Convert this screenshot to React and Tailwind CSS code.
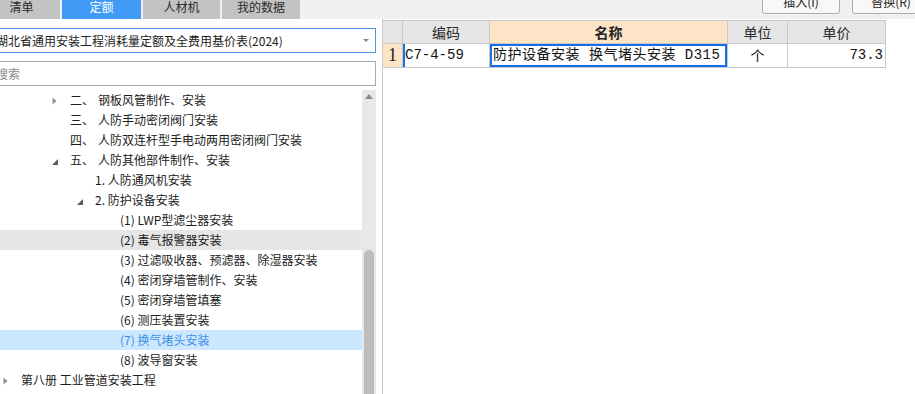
import React from 'react';

const tabs = [
    { name: '清单', w: 'w-[77px]', active: false },
    { name: '定额', w: 'w-[79px]', active: true },
    { name: '人材机', w: 'w-[77px]', active: false },
    { name: '我的数据', w: 'w-[78px]', active: false },
];

const rows = [
    { pl: 'pl-[69px]', arrow: 'closed', num: '二、', text: '钢板风管制作、安装' },
    { pl: 'pl-[69px]', num: '三、', text: '人防手动密闭阀门安装' },
    { pl: 'pl-[69px]', num: '四、', text: '人防双连杆型手电动两用密闭阀门安装' },
    { pl: 'pl-[69px]', arrow: 'open', num: '五、', text: '人防其他部件制作、安装' },
    { pl: 'pl-[94px]', text: '1. 人防通风机安装' },
    { pl: 'pl-[94px]', arrow: 'open', text: '2. 防护设备安装' },
    { pl: 'pl-[119px]', text: '(1) LWP型滤尘器安装' },
    { pl: 'pl-[119px]', text: '(2) 毒气报警器安装', hover: true },
    { pl: 'pl-[119px]', text: '(3) 过滤吸收器、预滤器、除湿器安装' },
    { pl: 'pl-[119px]', text: '(4) 密闭穿墙管制作、安装' },
    { pl: 'pl-[119px]', text: '(5) 密闭穿墙管填塞' },
    { pl: 'pl-[119px]', text: '(6) 测压装置安装' },
    { pl: 'pl-[119px]', text: '(7) 换气堵头安装', selected: true },
    { pl: 'pl-[119px]', text: '(8) 波导窗安装' },
    { pl: 'pl-[20px]', arrow: 'closed', text: '第八册 工业管道安装工程' },
];

function Arrow({ type }) {
    if (type === 'closed') {
        return (
            <svg width="5" height="8" viewBox="0 0 5 8" className="mt-[1px]">
                <path d="M0.5 0.5 L4.5 4 L0.5 7.5 Z" fill="#8f8f8f" />
            </svg>
        );
    }
    if (type === 'open') {
        return (
            <svg width="6" height="6" viewBox="0 0 6 6" className="mt-[3px]">
                <path d="M6 0 L6 6 L0 6 Z" fill="#5a5a5a" />
            </svg>
        );
    }
    return null;
}

export default function App() {
    return (
        <div className="w-[915px] h-[394px] overflow-hidden bg-white flex flex-col text-[#1c1c1c] font-['Noto_Sans_CJK_SC',sans-serif]">
            {/* top bar */}
            <div className="h-[19px] shrink-0 bg-[#f0f0f0] flex items-start">
                <div className="flex gap-[2px] -ml-[17px]">
                    {tabs.map((t) => (
                        <div
                            key={t.name}
                            className={`${t.w} h-[19px] text-center text-[12px] leading-[13px] ${t.active ? 'bg-[#3f9bf5] text-white' : 'bg-[#c3c3c3] text-[#2a2a2a]'}`}
                        >
                            {t.name}
                        </div>
                    ))}
                </div>
                <div className="ml-auto flex gap-[12px] -mr-[15px]">
                    <div className="w-[78px] h-[24px] -mt-[10px] border border-[#acacac] rounded-[3px] bg-[#f8f8f8] text-center text-[12px] leading-[22px] text-[#222]">
                        插入(I)
                    </div>
                    <div className="w-[78px] h-[24px] -mt-[10px] border border-[#acacac] rounded-[3px] bg-[#f8f8f8] text-center text-[12px] leading-[22px] text-[#222]">
                        替换(R)
                    </div>
                </div>
            </div>

            <div className="flex flex-1 min-h-0">
                {/* left panel */}
                <div className="w-[393px] -ml-[17px] shrink-0 flex flex-col">
                    <div className="mt-[9px] h-[25px] border border-[#4f96e8] flex items-center pl-[12px] pr-[6px] text-[12px]">
                        <span className="flex-1 whitespace-nowrap">湖北省通用安装工程消耗量定额及全费用基价表(2024)</span>
                        <svg width="6" height="3" viewBox="0 0 6 3">
                            <path d="M0 0 L6 0 L3 3 Z" fill="#8a8a8a" />
                        </svg>
                    </div>
                    <div className="mt-[8px] h-[25px] border border-[#a8a8a8] flex items-center pl-[12px] text-[12px] text-[#8a8a8a]">
                        搜索
                    </div>
                    <div className="mt-[4px] flex flex-1 min-h-0">
                        <div className="flex-1 flex flex-col">
                            {rows.map((r, i) => (
                                <div
                                    key={i}
                                    className={`h-[20px] shrink-0 flex items-center ${r.pl} text-[12px] whitespace-nowrap ${r.selected ? 'bg-[#cce8ff] text-[#3f8fe6]' : r.hover ? 'bg-[#e6e6e6]' : ''}`}
                                >
                                    <div className="w-[18px] flex items-center">
                                        <Arrow type={r.arrow} />
                                    </div>
                                    {r.num ? (
                                        <>
                                            <span>{r.num}</span>
                                            <span className="ml-[4px]">{r.text}</span>
                                        </>
                                    ) : (
                                        <span>{r.text}</span>
                                    )}
                                </div>
                            ))}
                        </div>
                        {/* scrollbar */}
                        <div className="w-[14px] bg-[#e8e8e8] flex flex-col items-center">
                            <svg width="8" height="5" viewBox="0 0 8 5" className="mt-[4px]">
                                <path d="M4 0 L8 5 L0 5 Z" fill="#8a8a8a" />
                            </svg>
                            <div className="mt-[151px] w-[10px] flex-1 bg-[#bdbdbd] rounded-t-[5px]" />
                        </div>
                    </div>
                </div>

                <div className="w-[6px] shrink-0" />
                <div className="w-[1px] shrink-0 bg-[#cacaca]" />

                {/* table */}
                <div className="flex-1 pt-[1px]">
                    <div className="grid grid-cols-[20px_87px_238px_60px_98px] w-fit border-t border-[#c8c8c8] text-[14px]">
                        <div className="h-[23px] bg-[#e6e6e6] border-r border-b border-[#c8c8c8]" />
                        <div className="h-[23px] bg-[#e6e6e6] border-r border-b border-[#c8c8c8] text-center leading-[22px] text-[#2a2a2a]">编码</div>
                        <div className="h-[23px] bg-[#fde4c6] border-r border-b border-[#c8c8c8] text-center leading-[22px] font-bold text-[#222]">名称</div>
                        <div className="h-[23px] bg-[#e6e6e6] border-r border-b border-[#c8c8c8] text-center leading-[22px] text-[#2a2a2a]">单位</div>
                        <div className="h-[23px] bg-[#e6e6e6] border-r border-b border-[#c8c8c8] text-center leading-[22px] text-[#2a2a2a]">单价</div>

                        <div className="h-[24px] bg-[#fde4c6] border-r border-b border-[#c8c8c8] text-center leading-[23px] text-[18px] text-[#222] font-['Liberation_Serif',serif]">1</div>
                        <div className="h-[24px] border-r border-b border-[#c8c8c8] shadow-[inset_2px_0_0_#1570e8] pl-[2px] leading-[23px] text-[#111] font-['Liberation_Mono','Noto_Sans_CJK_SC',monospace] whitespace-nowrap">C7-4-59</div>
                        <div className="h-[24px] border-r border-b border-[#c8c8c8] shadow-[inset_0_0_0_2px_#1570e8] pl-[3px] leading-[23px] tracking-[0.5px] text-[#111] font-['Liberation_Mono','Noto_Sans_CJK_SC',monospace] whitespace-nowrap overflow-hidden">防护设备安装 换气堵头安装 D315</div>
                        <div className="h-[24px] border-r border-b border-[#c8c8c8] text-center leading-[23px] text-[#111]">个</div>
                        <div className="h-[24px] border-r border-b border-[#c8c8c8] text-right pr-[2px] leading-[23px] text-[#111] font-['Liberation_Mono',monospace]">73.3</div>
                    </div>
                </div>
            </div>
        </div>
    );
}
